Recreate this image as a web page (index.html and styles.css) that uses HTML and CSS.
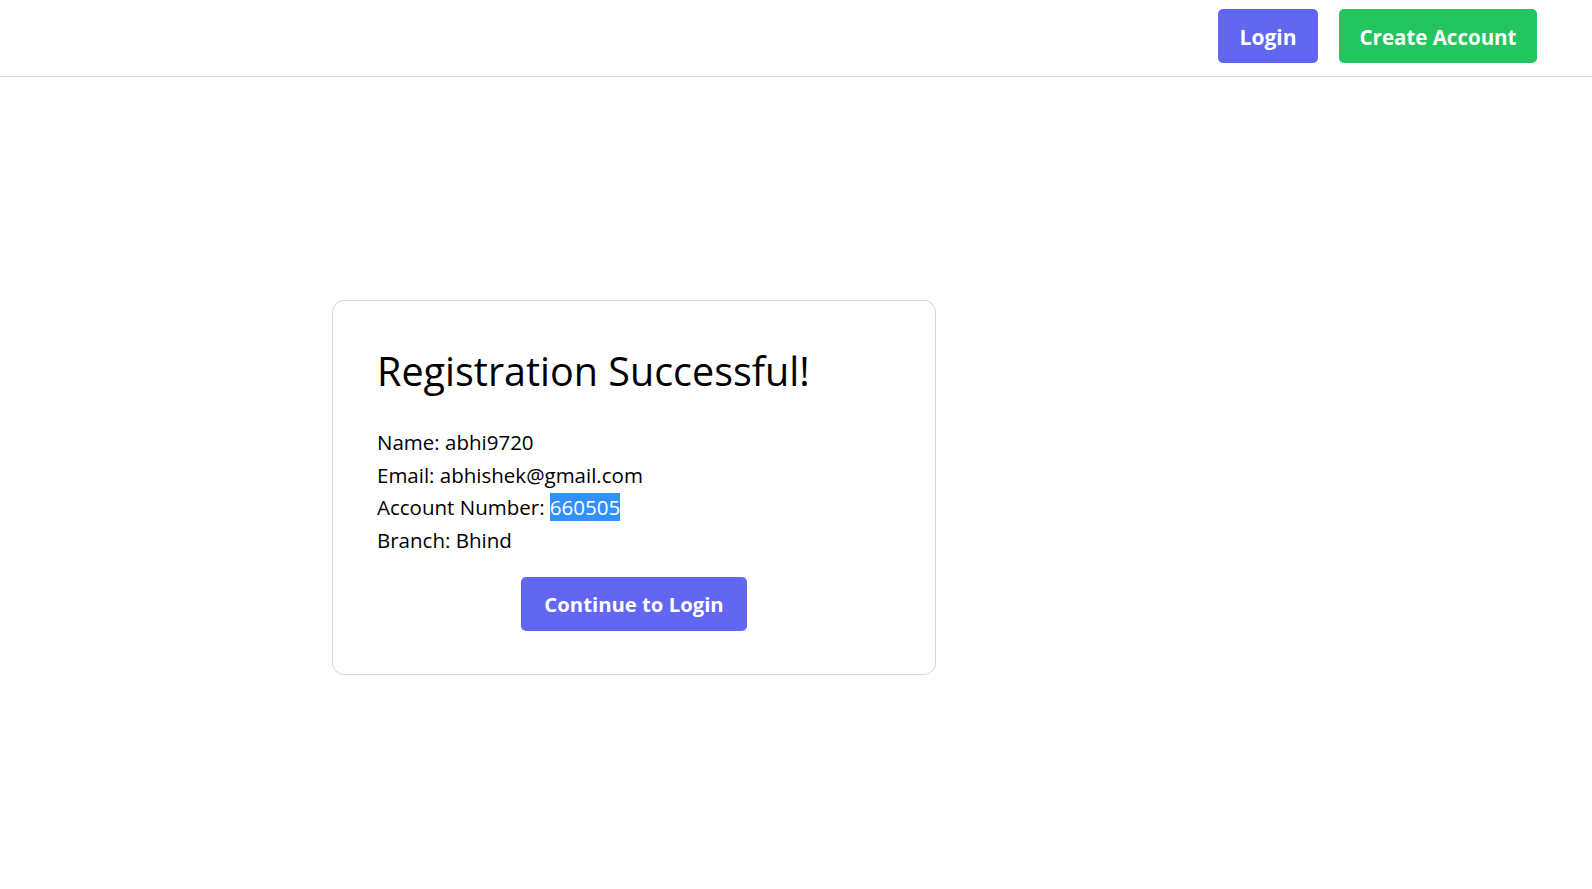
FILE: index.html
```html
<!DOCTYPE html>
<html lang="en">
<head>
<meta charset="utf-8">
<title>Registration Successful</title>
<link rel="stylesheet" href="styles.css">
</head>
<body>
<header class="topbar">
  <nav class="nav-actions">
    <a class="btn btn-indigo btn-nav btn-login" href="#">Login</a>
    <a class="btn btn-green btn-nav btn-create" href="#">Create Account</a>
  </nav>
</header>
<main class="main">
  <section class="card">
    <h1 class="card-title">Registration Successful!</h1>
    <div class="details">
      <p class="detail">Name: abhi9720</p>
      <p class="detail">Email: abhishek@gmail.com</p>
      <p class="detail">Account Number: <span class="selected">660505</span></p>
      <p class="detail">Branch: Bhind</p>
    </div>
    <div class="card-actions">
      <a class="btn btn-indigo btn-continue" href="#">Continue to Login</a>
    </div>
  </section>
</main>
</body>
</html>
```

FILE: styles.css
```css
* { box-sizing: border-box; }
html, body { margin: 0; padding: 0; background: #ffffff; }
body {
  font-family: "Open Sans", "Noto Sans", "Liberation Sans", sans-serif;
  color: #000;
}
.topbar {
  height: 77px;
  border-bottom: 1px solid #d4d4dc;
  display: flex;
  justify-content: flex-end;
  padding: 9px 55px 0 0;
}
.nav-actions {
  display: flex;
  gap: 21px;
  align-items: flex-start;
}
.btn {
  display: inline-flex;
  align-items: center;
  justify-content: center;
  color: #fff;
  text-decoration: none;
  font-weight: 700;
  border-radius: 5px;
  height: 54px;
  white-space: nowrap;
}
.btn-indigo { background: #6366f1; }
.btn-green { background: #22c55e; }
.btn-nav { font-size: 21px; padding-top: 2px; }
.btn-login { width: 100px; }
.btn-create { width: 198px; font-size: 20.5px; }
.main {
  padding: 223px 0 0 332px;
}
.card {
  width: 604px;
  border: 1px solid #d4d4dc;
  border-radius: 12px;
  padding: 46px 44px 43px 44px;
}
.card-title {
  margin: 0;
  font-size: 39.5px;
  line-height: 48px;
  font-weight: 500;
}
.details { margin-top: 31px; }
.detail {
  margin: 0;
  font-size: 20.5px;
  line-height: 32.5px;
}
.selected { background: #3390ff; color: #fff; }
.card-actions {
  display: flex;
  justify-content: center;
  margin-top: 21px;
}
.btn-continue { width: 226px; font-size: 20.3px; }
```
